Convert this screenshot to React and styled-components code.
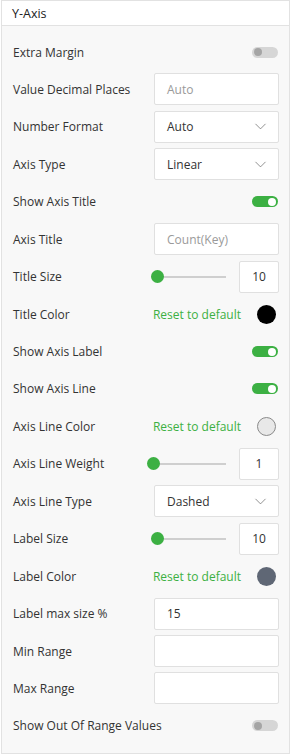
import React from "react";
import styled, { createGlobalStyle } from "styled-components";
import { ChevronDown } from "lucide-react";

const GlobalStyle = createGlobalStyle`
  body {
    margin: 0;
    background: #ffffff;
    font-family: "Open Sans", "Liberation Sans", sans-serif;
  }
`;

const Panel = styled.div`
  width: 289px;
  margin-left: 1px;
  border: 1px solid #e2e2e2;
  box-sizing: border-box;
  background: #f8f8f8;
`;

const Header = styled.div`
  height: 25px;
  display: flex;
  align-items: center;
  padding-left: 10px;
  background: #ffffff;
  border-bottom: 1px solid #e2e2e2;
  font-size: 12.5px;
  color: #222;
  box-sizing: border-box;
`;

const Body = styled.div`
  display: flex;
  flex-direction: column;
  gap: 5.45px;
  padding: 10px 10px 11px 11px;
`;

const Row = styled.div`
  height: 32px;
  display: flex;
  align-items: center;
  justify-content: space-between;
`;

const Label = styled.span`
  font-size: 12px;
  color: #333;
`;

const Field = styled.div`
  width: 125px;
  height: 32px;
  box-sizing: border-box;
  border: 1px solid #e0e0e0;
  border-radius: 2px;
  background: #ffffff;
  display: flex;
  align-items: center;
  justify-content: space-between;
  padding: 0 8px 0 12px;
  font-size: 12px;
  color: ${({ $placeholder }) => ($placeholder ? "#9a9a9a" : "#333")};
`;

const Toggle = styled.div`
  width: 26px;
  height: 11px;
  border-radius: 6px;
  background: ${({ $on }) => ($on ? "#3cb043" : "#d6d6d6")};
  position: relative;
  margin-right: 1px;

  &::after {
    content: "";
    position: absolute;
    top: 1.5px;
    ${({ $on }) => ($on ? "right: 2px;" : "left: 2px;")}
    width: 8px;
    height: 8px;
    border-radius: 50%;
    background: ${({ $on }) => ($on ? "#ffffff" : "#a5a5a5")};
  }
`;

const SliderGroup = styled.div`
  display: flex;
  align-items: center;
  gap: 13px;
`;

const Track = styled.div`
  width: 75px;
  height: 2px;
  background: #cfcfcf;
  position: relative;
`;

const Thumb = styled.div`
  position: absolute;
  left: 0;
  top: -6px;
  width: 13px;
  height: 13px;
  border-radius: 50%;
  background: #3cb043;
`;

const NumberBox = styled.div`
  width: 40px;
  height: 32px;
  box-sizing: border-box;
  border: 1px solid #e0e0e0;
  border-radius: 2px;
  background: #ffffff;
  display: flex;
  align-items: center;
  justify-content: center;
  font-size: 12px;
  color: #333;
`;

const ColorGroup = styled.div`
  display: flex;
  align-items: center;
  gap: 16px;
  padding-right: 3px;
`;

const ResetLink = styled.span`
  font-size: 12px;
  color: #3cb043;
  cursor: pointer;
`;

const Swatch = styled.div`
  width: 19px;
  height: 19px;
  border-radius: 50%;
  box-sizing: border-box;
  background: ${({ $color }) => $color};
  border: 1px solid ${({ $border }) => $border || "transparent"};
`;

const rows = [
  { label: "Extra Margin", type: "toggle", on: false },
  { label: "Value Decimal Places", type: "input", value: "Auto", placeholder: true },
  { label: "Number Format", type: "select", value: "Auto" },
  { label: "Axis Type", type: "select", value: "Linear" },
  { label: "Show Axis Title", type: "toggle", on: true },
  { label: "Axis Title", type: "input", value: "Count(Key)", placeholder: true },
  { label: "Title Size", type: "slider", value: "10" },
  { label: "Title Color", type: "color", color: "#000000" },
  { label: "Show Axis Label", type: "toggle", on: true },
  { label: "Show Axis Line", type: "toggle", on: true },
  { label: "Axis Line Color", type: "color", color: "#e8e8e8", border: "#8a8a8a" },
  { label: "Axis Line Weight", type: "slider", value: "1", offset: -4 },
  { label: "Axis Line Type", type: "select", value: "Dashed" },
  { label: "Label Size", type: "slider", value: "10" },
  { label: "Label Color", type: "color", color: "#5f6775" },
  { label: "Label max size %", type: "input", value: "15" },
  { label: "Min Range", type: "input", value: "" },
  { label: "Max Range", type: "input", value: "" },
  { label: "Show Out Of Range Values", type: "toggle", on: false },
];

const Control = ({ row }) => {
  switch (row.type) {
    case "toggle":
      return <Toggle $on={row.on} />;
    case "input":
      return <Field $placeholder={row.placeholder}>{row.value}</Field>;
    case "select":
      return (
        <Field>
          {row.value}
          <ChevronDown size={19} strokeWidth={0.9} color="#666" />
        </Field>
      );
    case "slider":
      return (
        <SliderGroup>
          <Track>
            <Thumb style={{ left: row.offset || 0 }} />
          </Track>
          <NumberBox>{row.value}</NumberBox>
        </SliderGroup>
      );
    case "color":
      return (
        <ColorGroup>
          <ResetLink>Reset to default</ResetLink>
          <Swatch $color={row.color} $border={row.border} />
        </ColorGroup>
      );
    default:
      return null;
  }
};

const App = () => {
  return (
    <>
      <GlobalStyle />
      <Panel>
        <Header>Y-Axis</Header>
        <Body>
          {rows.map((row) => (
            <Row key={row.label}>
              <Label>{row.label}</Label>
              <Control row={row} />
            </Row>
          ))}
        </Body>
      </Panel>
    </>
  );
};

export default App;
